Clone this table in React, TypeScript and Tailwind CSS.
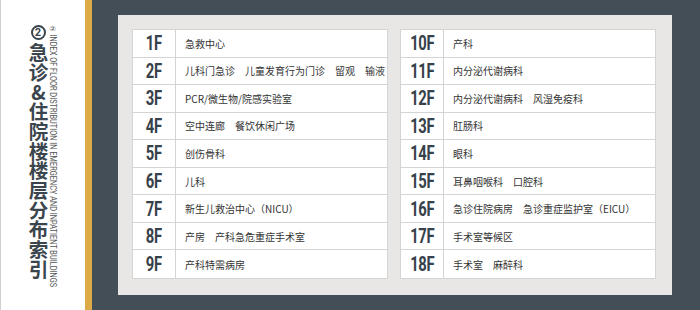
import React from "react";

const left: [string, string][] = [
  ["1F", "急救中心"],
  ["2F", "儿科门急诊\u3000儿童发育行为门诊\u3000留观\u3000输液"],
  ["3F", "PCR/微生物/院感实验室"],
  ["4F", "空中连廊\u3000餐饮休闲广场"],
  ["5F", "创伤骨科"],
  ["6F", "儿科"],
  ["7F", "新生儿救治中心（NICU）"],
  ["8F", "产房\u3000产科急危重症手术室"],
  ["9F", "产科特需病房"],
];
const right: [string, string][] = [
  ["10F", "产科"],
  ["11F", "内分泌代谢病科"],
  ["12F", "内分泌代谢病科\u3000风湿免疫科"],
  ["13F", "肛肠科"],
  ["14F", "眼科"],
  ["15F", "耳鼻咽喉科\u3000口腔科"],
  ["16F", "急诊住院病房\u3000急诊重症监护室（EICU）"],
  ["17F", "手术室等候区"],
  ["18F", "手术室\u3000麻醉科"],
];

function Table({ rows }: { rows: [string, string][] }) {
  return (
    <div className="w-[256px] h-[250px] grid grid-rows-9 bg-white border border-[#d4d4d4]">
      {rows.map(([f, t], i) => (
        <div
          key={f}
          className={`flex items-stretch ${i < rows.length - 1 ? "border-b border-[#d4d4d4]" : ""}`}
        >
          <div className="w-[43px] shrink-0 border-r border-[#d4d4d4] flex items-center justify-center">
            <span className="inline-block scale-x-[0.74] text-[20px] font-bold text-[#36414a] leading-none tracking-[-0.5px] [font-family:Roboto,sans-serif]">
              {f}
            </span>
          </div>
          <div className="flex items-center pl-[9px] text-[10px] text-[#333] whitespace-pre [font-family:'Noto_Sans_CJK_SC',sans-serif]">
            {t}
          </div>
        </div>
      ))}
    </div>
  );
}

export default function App() {
  return (
    <div className="w-[700px] h-[310px] flex overflow-hidden">
      <div className="w-[85px] h-full bg-white border-l border-[#cfcfcf] flex pl-[26px] pt-[24px]">
        <div className="w-[22px] flex flex-col items-center pt-[1px]">
          <div className="w-[15px] h-[15px] rounded-full border-[2px] border-[#3b454d] flex items-center justify-center text-[11px] font-bold text-[#3b454d] leading-none [font-family:Roboto,sans-serif] mb-[3px]">
            2
          </div>
          <div className="[writing-mode:vertical-rl] [text-orientation:upright] text-[19.5px] leading-[22px] tracking-[0.2px] font-bold text-[#3b454d] whitespace-nowrap [font-family:'Noto_Sans_CJK_SC',sans-serif]">
            急诊&amp;住院楼楼层分布索引
          </div>
        </div>
        <div className="w-[8px] flex justify-center">
          <div className="origin-top scale-y-[0.865] [writing-mode:vertical-rl] text-[8.5px] leading-[8px] text-[#555] whitespace-nowrap [font-family:Roboto,sans-serif]">
            ② INDEX OF FLOOR DISTRIBUTION IN EMERGENCY AND INPATIENT BUILDINGS
          </div>
        </div>
      </div>
      <div className="w-[7px] h-full bg-[#dcab48]" />
      <div className="flex-1 h-full bg-[#434e56] pt-[15px] pl-[26px]">
        <div className="w-[554px] h-[280px] bg-[#e8e7e5] pt-[14px] pl-[14px] flex gap-[12px]">
          <Table rows={left} />
          <Table rows={right} />
        </div>
      </div>
    </div>
  );
}
